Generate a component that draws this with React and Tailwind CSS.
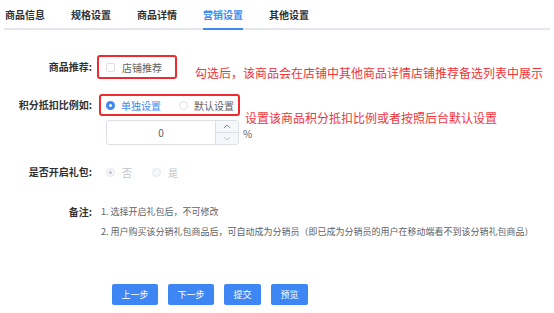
import React from 'react';

const tabs = ['商品信息', '规格设置', '商品详情', '营销设置', '其他设置'];
const buttons = [
  { text: '上一步', w: 'w-[46px]' },
  { text: '下一步', w: 'w-[46px]' },
  { text: '提交', w: 'w-[37px]' },
  { text: '预览', w: 'w-[37px]' },
];

function Label({ children }) {
  return (
    <div className="w-[92px] shrink-0 text-right text-[10px] font-bold text-[#303133] leading-[20px] whitespace-nowrap">
      {children}
    </div>
  );
}

export default function App() {
  return (
    <div className="w-[554px] h-[313px] bg-white overflow-hidden font-['Noto_Sans_CJK_SC',sans-serif]">
      {/* tabs */}
      <div className="mx-[4px] h-[30px] border-b-2 border-[#e4e7ed] flex gap-[26px] pl-[1px]">
        {tabs.map((t) => (
          <div
            key={t}
            className={
              'relative h-full flex items-center text-[10px] font-bold ' +
              (t === '营销设置' ? 'text-[#4089f5]' : 'text-[#303133]')
            }
          >
            {t}
            {t === '营销设置' && (
              <div className="absolute left-0 right-0 bottom-[-2px] h-[2px] bg-[#4089f5]" />
            )}
          </div>
        ))}
      </div>

      {/* 商品推荐 */}
      <div className="relative mt-[25px] flex items-center h-[24px]">
        <Label>商品推荐:</Label>
        <div className="ml-[5px] h-[24px] w-[80px] border-2 border-[#ee2b2f] rounded-[3px] flex items-center pl-[7px] whitespace-nowrap">
          <span className="shrink-0 w-[9px] h-[9px] border border-[#dcdfe6] rounded-[2px] bg-white" />
          <span className="ml-[7px] text-[10px] text-[#606266]">店铺推荐</span>
        </div>
        <div className="absolute left-[195px] top-[10px] text-[12px] leading-[16px] text-[#f0353b] whitespace-nowrap">
          勾选后，该商品会在店铺中其他商品详情店铺推荐备选列表中展示
        </div>
      </div>

      {/* 积分抵扣比例 */}
      <div className="relative mt-[15px] flex items-start">
        <div className="h-[22px] flex items-center">
          <Label>积分抵扣比例如:</Label>
        </div>
        <div className="ml-[7px] flex flex-col">
          <div className="h-[22px] w-[141px] border-2 border-[#ee2b2f] rounded-[3px] flex items-center pl-[5px] whitespace-nowrap">
            <span className="shrink-0 w-[9px] h-[9px] rounded-full bg-[#4089f5] flex items-center justify-center">
              <span className="w-[3px] h-[3px] rounded-full bg-white" />
            </span>
            <span className="ml-[6px] text-[10px] text-[#4089f5]">单独设置</span>
            <span className="shrink-0 ml-[18px] w-[9px] h-[9px] rounded-full border border-[#dcdfe6] bg-white" />
            <span className="ml-[6px] text-[10px] text-[#606266]">默认设置</span>
          </div>
          <div className="mt-[4px] ml-[7px] flex items-center">
            <div className="w-[133px] h-[25px] border border-[#dcdfe6] rounded-[3px] flex overflow-hidden">
              <div className="flex-1 flex items-center justify-center text-[10px] text-[#606266]">0</div>
              <div className="w-[23px] border-l border-[#dcdfe6] bg-[#f5f7fa] flex flex-col">
                <div className="flex-1 flex items-center justify-center border-b border-[#dcdfe6]">
                  <svg width="8" height="5" viewBox="0 0 8 5" fill="none">
                    <path d="M1 4 L4 1 L7 4" stroke="#909399" strokeWidth="1" />
                  </svg>
                </div>
                <div className="flex-1 flex items-center justify-center">
                  <svg width="8" height="5" viewBox="0 0 8 5" fill="none">
                    <path d="M1 1 L4 4 L7 1" stroke="#c0c4cc" strokeWidth="1" />
                  </svg>
                </div>
              </div>
            </div>
            <span className="ml-[4px] mt-[2px] text-[10px] text-[#606266]">%</span>
          </div>
        </div>
        <div className="absolute left-[245px] top-[16px] text-[12px] leading-[16px] text-[#f0353b] whitespace-nowrap">
          设置该商品积分抵扣比例或者按照后台默认设置
        </div>
      </div>

      {/* 是否开启礼包 */}
      <div className="mt-[17px] flex items-center h-[20px]">
        <Label>是否开启礼包:</Label>
        <div className="ml-[14px] flex items-center">
          <span className="w-[9px] h-[9px] rounded-full border border-[#e4e7ed] bg-[#f5f7fa] flex items-center justify-center">
            <span className="w-[3px] h-[3px] rounded-full bg-[#c0c4cc]" />
          </span>
          <span className="ml-[7px] text-[10px] text-[#c0c4cc]">否</span>
          <span className="ml-[20px] w-[9px] h-[9px] rounded-full border border-[#e4e7ed] bg-[#f5f7fa]" />
          <span className="ml-[7px] text-[10px] text-[#c0c4cc]">是</span>
        </div>
      </div>

      {/* 备注 */}
      <div className="mt-[20px] flex items-start">
        <Label>备注:</Label>
        <div className="ml-[9px] text-[9px] leading-[20px] text-[#606266] whitespace-nowrap">
          <div>1. 选择开启礼包后，不可修改</div>
          <div>2. 用户购买该分销礼包商品后，可自动成为分销员（即已成为分销员的用户在移动端看不到该分销礼包商品）</div>
        </div>
      </div>

      {/* buttons */}
      <div className="mt-[42px] pl-[112px] flex gap-[10px]">
        {buttons.map((b) => (
          <button
            key={b.text}
            className={b.w + ' h-[21px] rounded-[2px] bg-[#3d86f4] text-white text-[9px] flex items-center justify-center'}
          >
            {b.text}
          </button>
        ))}
      </div>
    </div>
  );
}
